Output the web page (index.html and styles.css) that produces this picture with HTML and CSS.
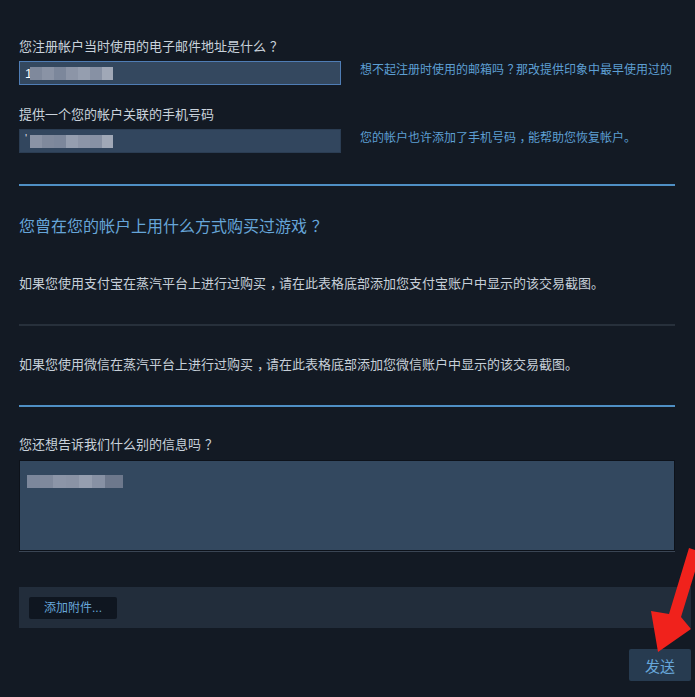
FILE: index.html
```html
<!DOCTYPE html>
<html lang="zh-CN">
<head>
<meta charset="utf-8">
<title>帐户恢复</title>
<link rel="stylesheet" href="styles.css">
</head>
<body>
<div class="page">
  <div class="field">
    <div class="label">您注册帐户当时使用的电子邮件地址是什么<span class="pu">？</span></div>
    <div class="row">
      <div class="input focused">
        <span class="typed">1</span>
        <span class="mosaic"><i class="c1"></i><i class="c2"></i><i class="c3"></i><i class="c4"></i><i class="c5"></i><i class="c6"></i><i class="c7"></i></span>
      </div>
      <div class="help">想不起注册时使用的邮箱吗<span class="pu">？</span>那改提供印象中最早使用过的</div>
    </div>
  </div>

  <div class="field second">
    <div class="label">提供一个您的帐户关联的手机号码</div>
    <div class="row">
      <div class="input">
        <span class="tick">'</span>
        <span class="mosaic"><i class="c2"></i><i class="c1"></i><i class="c3"></i><i class="c5"></i><i class="c4"></i><i class="c6"></i><i class="c7"></i></span>
      </div>
      <div class="help">您的帐户也许添加了手机号码<span class="pu">，</span>能帮助您恢复帐户。</div>
    </div>
  </div>

  <hr class="rule blue first-rule">

  <h2 class="heading">您曾在您的帐户上用什么方式购买过游戏<span class="pu">？</span></h2>

  <p class="para">如果您使用支付宝在蒸汽平台上进行过购买<span class="pu">，</span>请在此表格底部添加您支付宝账户中显示的该交易截图。</p>

  <hr class="rule gray">

  <p class="para second-para">如果您使用微信在蒸汽平台上进行过购买<span class="pu">，</span>请在此表格底部添加您微信账户中显示的该交易截图。</p>

  <hr class="rule blue">

  <div class="label third">您还想告诉我们什么别的信息吗<span class="pu">？</span></div>
  <div class="textarea">
    <span class="mosaic wide"><i class="c3"></i><i class="c1"></i><i class="c4"></i><i class="c2"></i><i class="c5"></i><i class="c6"></i><i class="c8"></i></span>
  </div>

  <div class="footer">
    <div class="attach-panel">
      <button class="attach-btn" type="button">添加附件...</button>
    </div>
    <div class="send-row">
      <button class="send-btn" type="button">发送</button>
    </div>
  </div>
</div>

<svg class="arrow" width="695" height="697" viewBox="0 0 695 697" aria-hidden="true">
  <polygon points="689,548 701,552 681,617 691,629 658,652 651,611 669,614" fill="#f0221c"/>
</svg>
</body>
</html>
```

FILE: styles.css
```css
html, body {
  margin: 0;
  padding: 0;
  background: #131a24;
}

body {
  font-family: "Liberation Sans", "Noto Sans CJK SC", sans-serif;
  color: #c3ccd6;
  width: 695px;
  height: 697px;
  overflow: hidden;
  position: relative;
}

/* full-width punctuation drawn centred in its cell, as in the original font */
.pu {
  padding-left: 0.3em;
  letter-spacing: -0.3em;
}

.page {
  padding: 38px 0 0 19px;
  width: 656px;
}

.label {
  font-size: 13px;
  line-height: 18px;
  color: #c9d2db;
  margin-bottom: 5px;
  white-space: nowrap;
}

.field.second {
  margin-top: 21px;
}

.row {
  display: flex;
  align-items: flex-start;
}

.input {
  box-sizing: border-box;
  width: 322px;
  height: 24px;
  background: #32465e;
  border: 1px solid #2b3d53;
  display: flex;
  align-items: center;
  padding-left: 5px;
  flex-shrink: 0;
}

.input.focused {
  border-color: #4f7db5;
  background: #34485f;
}

.typed {
  font-size: 13px;
  color: #ffffff;
  width: 5px;
}

.tick {
  font-size: 11px;
  color: #d8dde5;
  width: 5px;
  align-self: flex-start;
  margin-top: 2px;
  line-height: 12px;
}

.mosaic {
  display: flex;
  height: 13px;
}

.mosaic i {
  display: block;
  width: 12px;
  height: 100%;
}

.mosaic .c1 { background: #7f899c; }
.mosaic .c2 { background: #8a93a5; }
.mosaic .c3 { background: #7c879b; }
.mosaic .c4 { background: #8c95a7; }
.mosaic .c5 { background: #959eaf; }
.mosaic .c6 { background: #8791a4; }
.mosaic .c7 { background: #a0a8b7; width: 11px; }
.mosaic .c8 { background: #6d788c; width: 14px; }

.mosaic.wide i { width: 13px; }
.mosaic.wide .c8 { width: 18px; }

.help {
  margin-left: 19px;
  font-size: 12px;
  line-height: 18px;
  color: #5d9fd3;
  white-space: nowrap;
}

.rule {
  border: 0;
  margin: 0;
  height: 2px;
}

.rule.blue {
  background: #4f8fc4;
  margin-top: 31px;
}

.rule.first-rule {
  margin-top: 31px;
}

.rule.gray {
  background: #27303b;
  margin-top: 31px;
}

.heading {
  margin: 30px 0 0;
  font-size: 16px;
  line-height: 22px;
  font-weight: normal;
  color: #66a5d8;
  white-space: nowrap;
}

.para {
  margin: 37px 0 0;
  font-size: 13px;
  line-height: 18px;
  color: #c6cfd8;
  white-space: nowrap;
}

.para.second-para {
  margin-top: 30px;
}

.label.third {
  margin-top: 29px;
  margin-bottom: 6px;
}

.textarea {
  box-sizing: border-box;
  height: 91px;
  width: 656px;
  background: #33485f;
  border: 1px solid #0d121a;
  box-shadow: 0 1px 0 #3a4554;
  padding: 14px 0 0 7px;
}

.footer {
  width: 672px;
  margin-top: 36px;
}

.attach-panel {
  background: #222d3b;
  height: 41px;
  box-sizing: border-box;
  padding: 10px 0 0 10px;
}

.attach-btn {
  font-family: inherit;
  border: 0;
  border-radius: 2px;
  background: #0f1620;
  color: #67a7da;
  font-size: 12px;
  line-height: 22px;
  height: 22px;
  width: 88px;
  padding: 0;
  margin: 0;
  text-align: center;
}

.send-row {
  display: flex;
  justify-content: flex-end;
  margin-top: 21px;
}

.send-btn {
  font-family: inherit;
  border: 0;
  border-radius: 2px;
  background: #273b50;
  color: #67a7da;
  font-size: 15px;
  height: 32px;
  width: 62px;
  padding: 0;
  margin: 0;
}

.arrow {
  position: absolute;
  left: 0;
  top: 0;
  pointer-events: none;
}
```
